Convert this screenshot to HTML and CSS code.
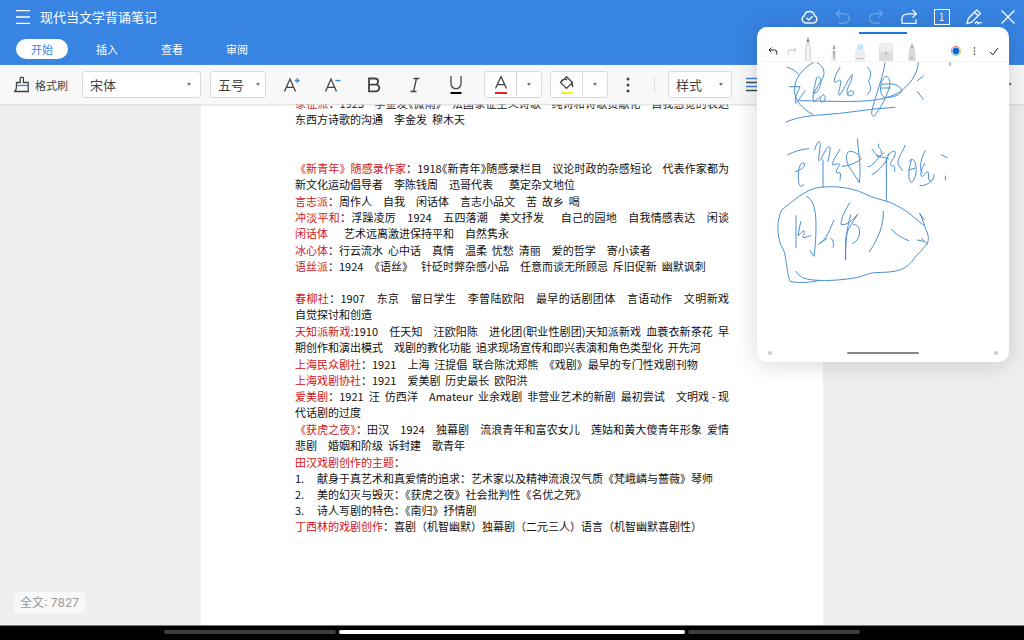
FILE: index.html
```html
<!DOCTYPE html>
<html lang="zh-CN">
<head>
<meta charset="utf-8">
<title>现代当文学背诵笔记</title>
<link rel="stylesheet" href="styles.css">
</head>
<body>
<div class="app">
  <header class="header">
    <div class="titlebar">
      <button class="icon-btn menu-btn" aria-label="菜单"><svg width="14" height="14" viewBox="0 0 14 14"><path d="M0 .7h14M0 7h14M0 13.3h14"/></svg></button>
      <h1 class="title">现代当文学背诵笔记</h1>
      <div class="actions">
        <button class="icon-btn" aria-label="云同步"><svg width="17" height="16" viewBox="0 0 17 16"><path d="M4.500 14h8a3.800 3.800 0 0 0 1.200-7.200A5.300 5.300 0 0 0 3.300 6.800 3.800 3.800 0 0 0 4.500 14z"/><path d="M5.500 8.800l2.300 2.200 3.800-3.800"/></svg></button>
        <button class="icon-btn faded" aria-label="撤销"><svg width="16" height="16" viewBox="0 0 16 16"><path d="M5 1L1.500 4.600 5 8.200M1.800 4.600h7.700a4.800 4.800 0 0 1 0 9.600H4"/></svg></button>
        <button class="icon-btn faded" aria-label="重做"><svg width="16" height="16" viewBox="0 0 16 16"><path d="M11 1l3.500 3.600L11 8.200M14.200 4.600H6.500a4.800 4.800 0 0 0 0 9.600H12"/></svg></button>
        <button class="icon-btn" aria-label="分享"><svg width="16" height="16" viewBox="0 0 16 16"><path d="M11.500 1l4 3.800-4 3.800M15 4.800H7.500C3 4.800 1 7 1 9.500v4.800h14v-4"/></svg></button>
        <button class="icon-btn page-btn" aria-label="窗口"><span class="page-num">1</span></button>
        <button class="icon-btn" aria-label="编辑"><svg width="17" height="16" viewBox="0 0 17 16"><path d="M1 14.500l1.200-4.800L10.800 1l3.600 3.400-8.600 8.800zM8.600 3.400l3.500 3.400M9 14.600c1.500-2.500 2.500-2.500 3 0 1-1.500 2-1.200 3.800-.8"/></svg></button>
        <button class="icon-btn" aria-label="关闭"><svg width="16" height="16" viewBox="0 0 16 16"><path d="M1.500 1.500l13 13M14.500 1.500l-13 13"/></svg></button>
      </div>
    </div>
    <nav class="tabs">
      <button class="tab active">开始</button>
      <button class="tab">插入</button>
      <button class="tab">查看</button>
      <button class="tab">审阅</button>
    </nav>
  </header>

  <div class="toolbar">
    <button class="tool brush"><svg width="16" height="17" viewBox="0 0 16 17"><path d="M2.500 6.500h3.700V2a.7.7 0 0 1 .7-.7h1.800a.7.7 0 0 1 .7.700v4.500h4.800v9H.7c1.400-1.500 1.800-3 1.800-5z"/><path class="blue" d="M3.200 9.500h10.500"/></svg>格式刷</button>
    <label class="pick pick-font"><select aria-label="字体"><option>宋体</option></select></label>
    <label class="pick pick-size"><select aria-label="字号"><option>五号</option></select></label>
    <div class="formats">
      <button class="tool" aria-label="增大字号"><svg width="18" height="18" viewBox="0 0 18 18"><path d="M1.500 15.500L7 3l5.500 12.500M3.400 11.300h7.200"/><path class="blue" d="M11.800 4.500h5M14.300 2v5"/></svg></button>
      <button class="tool" aria-label="减小字号"><svg width="18" height="18" viewBox="0 0 18 18"><path d="M1.500 15.500L7 3l5.500 12.500M3.400 11.300h7.200"/><path class="blue" d="M11.500 4.500h5"/></svg></button>
      <button class="tool" aria-label="加粗"><svg width="18" height="18" viewBox="0 0 18 18"><path class="heavy" d="M4 2.500h6a3.100 3.100 0 0 1 0 6.200H4zM4 8.700h7a3.300 3.300 0 0 1 0 6.600H4z"/></svg></button>
      <button class="tool" aria-label="斜体"><svg width="18" height="18" viewBox="0 0 18 18"><path d="M7.500 2.500h6M4.500 15.500h6M10.500 2.500l-3 13"/></svg></button>
      <button class="tool" aria-label="下划线"><svg width="18" height="18" viewBox="0 0 18 18"><path d="M4 0v7.500a5 5.200 0 0 0 10 0V0"/><path class="ink" d="M3.500 17h11"/></svg></button>
    </div>
    <div class="split">
      <button class="tool" aria-label="字体颜色"><svg width="18" height="18" viewBox="0 0 18 18"><path d="M3.500 12.500L9 .5l5.500 12M5.300 8.700h7.400"/><path class="red" d="M3 17h12"/></svg></button>
      <button class="tool drop" aria-label="更多字体颜色"></button>
    </div>
    <div class="split">
      <button class="tool" aria-label="突出显示"><svg width="18" height="18" viewBox="0 0 18 18"><path d="M8.500.8l6 5.700-6 5.900-6-5.900zM3 5.500c1-2.200 4-3 6.200-1.600M14 7l.8 4"/><path class="yellow" d="M3 17h12"/></svg></button>
      <button class="tool drop" aria-label="更多突出显示颜色"></button>
    </div>
    <button class="tool more" aria-label="更多格式"><svg width="4" height="18" viewBox="0 0 4 18"><circle cx="2" cy="3" r="1.500"/><circle cx="2" cy="9" r="1.500"/><circle cx="2" cy="15" r="1.500"/></svg></button>
    <span class="rule"></span>
    <label class="pick pick-style"><select aria-label="样式"><option>样式</option></select></label>
    <button class="tool align" aria-label="对齐"><svg width="18" height="16" viewBox="0 0 18 16"><path class="blue" d="M0 1.500h16M0 9.500h16"/><path d="M0 5.500h16M0 13.500h11"/></svg></button>
    <button class="tool drop last" aria-label="更多工具"></button>
  </div>

  <main class="workspace">
    <article class="page">
      <p class="long"><span class="fill"><b>象征派</b>：1925    李金发<span class="half">《</span>微雨<span class="half">》</span>    法国象征主义诗歌    纯诗和诗歌贡献化    自我感觉的表达</span>东西方诗歌的沟通　李金发  穆木天</p>
      <p class="blank"></p>
      <p class="blank"></p>
      <p class="long"><span class="fill"><b>《新青年》随感录作家</b>：1918<span class="half">《</span>新青年<span class="half">》</span>随感录栏目    议论时政的杂感短论    代表作家都为</span>新文化运动倡导者　李陈钱周　迅哥代表　  奠定杂文地位</p>
      <p><b>言志派</b>：周作人　自我　闲话体　言志小品文　苦  故乡  喝</p>
      <p class="long"><span class="fill"><b>冲淡平和</b>：浮躁凌厉　1924　五四落潮　美文抒发　  自己的园地　自我情感表达　闲谈</span><b>闲话体</b>　  艺术远离激进保持平和　自然隽永</p>
      <p><b>冰心体</b>：行云流水  心中话　真情　温柔  忧愁  清丽　爱的哲学　寄小读者</p>
      <p><b>语丝派</b>：1924　《语丝》　 针砭时弊杂感小品　任意而谈无所顾忌  斥旧促新  幽默讽刺</p>
      <p class="blank"></p>
      <p class="long"><span class="fill"><b>春柳社</b>：1907　东京　留日学生　李曾陆欧阳　最早的话剧团体　言语动作　文明新戏</span>自觉探讨和创造</p>
      <p class="long"><span class="fill"><b>天知派新戏</b>:1910　任天知　汪欧阳陈　进化团(职业性剧团)天知派新戏  血蓑衣新茶花  早</span>期创作和演出模式　戏剧的教化功能  追求现场宣传和即兴表演和角色类型化  开先河</p>
      <p><b>上海民众剧社</b>：1921　上海  汪提倡  联合陈沈郑熊　《戏剧》最早的专门性戏剧刊物</p>
      <p><b>上海戏剧协社</b>：1921　爱美剧  历史最长  欧阳洪</p>
      <p class="long"><span class="fill"><b>爱美剧</b>：1921  汪  仿西洋　Amateur  业余戏剧  非营业艺术的新剧  最初尝试　文明戏 - 现</span>代话剧的过度</p>
      <p class="long"><span class="fill"><b>《获虎之夜》</b>：田汉　1924　独幕剧　流浪青年和富农女儿　莲姑和黄大傻青年形象  爱情</span>悲剧　婚姻和阶级  诉封建　歌青年</p>
      <p><b>田汉戏剧创作的主题</b>：</p>
      <ol class="themes">
        <li>献身于真艺术和真爱情的追求：艺术家以及精神流浪汉气质《梵峨嶙与蔷薇》琴师</li>
        <li>美的幻灭与毁灭：《获虎之夜》社会批判性《名优之死》</li>
        <li>诗人写剧的特色：《南归》抒情剧</li>
      </ol>
      <p><b>丁西林的戏剧创作</b>：喜剧（机智幽默）独幕剧（二元三人）语言（机智幽默喜剧性）</p>
    </article>
    <div class="count">全文: 7827</div>
  </main>

  <footer class="dock"><div class="dock-bars"><span class="bar"></span><span class="bar current"></span><span class="bar"></span></div></footer>
</div>

<section class="note" aria-label="手写便签">
  <div class="note-grip"></div>
  <div class="note-tools">
    <div class="note-group">
      <button class="note-btn" aria-label="撤销"><svg width="10" height="8" viewBox="0 0 10 8"><path d="M3.500.7L1 3l2.500 2.300M1.200 3h5.300A2.300 2.300 0 0 1 8.800 5.300V7.500"/></svg></button>
      <button class="note-btn faded" aria-label="重做"><svg width="10" height="8" viewBox="0 0 10 8"><path d="M6.500.7L9 3 6.500 5.300M8.800 3H3.500A2.300 2.300 0 0 0 1.200 5.300V7.500"/></svg></button>
    </div>
    <div class="pens">
      <button class="pen" aria-label="钢笔"><svg width="14" height="24" viewBox="0 0 14 24"><path fill="#3c7fc0" d="M7 0l1.300 5H5.700z"/><path fill="#e2e2e2" d="M5.500 5h3L10 10v14H4V10z"/><path fill="#f7f7f7" d="M6 9h2v15H6z"/></svg></button>
      <button class="pen" aria-label="毛笔"><svg width="14" height="24" viewBox="0 0 14 24"><path fill="#959595" d="M7 7l1.500 6h-3z"/><path fill="#ececec" d="M5 12h4l1 12H4z"/><path fill="#a5a5a5" d="M6 14h2l-.5 8h-1z"/></svg></button>
      <button class="pen" aria-label="荧光笔"><svg width="14" height="24" viewBox="0 0 14 24"><path fill="#bfe3f6" d="M5 8l5-1v5H4z"/><path fill="#ededed" d="M4 12h6l2 3v9H2v-9z"/><path fill="#c5c5c5" d="M3 21h8v1H3z"/></svg></button>
      <button class="pen" aria-label="橡皮"><svg width="14" height="24" viewBox="0 0 14 24"><rect width="14" height="20" y="6" rx="3" fill="#ddd"/><rect width="14" height="9" y="6" rx="3" fill="#ededed"/><path d="M7 14.500v3.500" stroke="#aaa"/></svg></button>
      <button class="pen" aria-label="铅笔"><svg width="14" height="24" viewBox="0 0 14 24"><path fill="#b0b0b0" d="M7 6l2 5H5z"/><path fill="#dadada" d="M5 11h4l1.500 3v10h-7V14z"/><path fill="#bbb" d="M5 20h3v2H5z"/></svg></button>
    </div>
    <div class="note-group">
      <button class="note-btn swatch" aria-label="颜色"><span class="swatch-dot"></span></button>
      <button class="note-btn" aria-label="更多"><svg class="dots" width="3" height="8" viewBox="0 0 3 8"><circle cx="1.500" cy="1" r=".8"/><circle cx="1.500" cy="4" r=".8"/><circle cx="1.500" cy="7" r=".8"/></svg></button>
      <button class="note-btn" aria-label="完成"><svg width="10" height="9" viewBox="0 0 10 9"><path d="M1 5l2.800 2.800L9 1"/></svg></button>
    </div>
  </div>
  <svg class="strokes" viewBox="21 -69 756 1005" aria-hidden="true">
    <g transform="translate(90 30)">
      <path d="M22 22c12 2 24 10 33 20M28 80h32c-4 14-16 26-14 48 4 8 16-20 29-36M100 8C70 22 40 58 44 92c0 30 24 56 54 71"/>
      <path d="M112 8c20 12 26 32 14 50-10 14-18 28-24 42 12 0 22-22 20-42-4-12-12-10-14 2-4 22-14 52-6 66l18-16M130 104c-10 4-12 18-6 22 10 4 18-18 6-22"/>
      <path d="M180 22c-8 14-20 34-16 44 6 4 16-12 18-4 2 14-10 34-4 44 12-12 24-46 38-62 2 24-20 40-14 58 8 10 22 4 18-8-8-6-20 4-16 14M262 22c10 8 14 18 6 36-6 6 4 16 4 24 0 10-4 16-10 21"/>
      <path d="M315 8c-4 40-30 100-40 148 0 8 2 14 8 12 18-22 42-66 46-92 2-16-4-30-14-26-16 14-20 56 0 62 24 2 48-8 50-20-2-16-30-26-60-18M305 84h26"/>
      <path d="M415 8c-2 36-26 66-56 88-36 22-80 26-130 28-60 2-120-2-170-2M18 186c32-14 66-18 102-21 80-4 150-20 225-23"/>
      <path d="M430 48l-18 14M412 95l18 23M510 8v9"/>
    </g>
    <path d="M113 314c20-8 38-17 63-18M136 365c22-6 32-18 26-26-12-4-18 20-17 46 2 20 4 32 16 18M194 299c4-12 8-26 14-24 8 6-4 42-2 58M212 330c14-30 22-46 28-38 2 10-4 28-6 42M219 330v81M270 298c-14 22-26 42-22 46 8 2 18-6 22 0-6 8-14 18-10 24 6 2 10-2 12 4l-2 18"/>
    <path d="M322 267c4 44 12 90 6 131-12-22-32-44-36-60-4-16-4-30 6-34 14 0 24 6 34 18M276 349c18-2 38-6 58-22"/>
    <path d="M386 282c-6 12 12 14 8 28M366 298c10 14 20 26 28 18M354 350c12 6 30-32 48-42M366 374c24-14 44-36 50-62M380 318l36 8M409 325v128M412 318c20-22 28-18 22 0-4 10-16 22-12 28 8 4 14-4 12 18M466 286c-8 20-24 38-22 54 2 10 10 12 12 22M484 330c-8 26-12 58 0 68 12-8 18-34 12-58-4-14-12-16-18-6M476 360l20-6M526 302c-12 18-20 54-10 66M524 340c-10 20-14 30-10 38 6 8 12-16 20-12 4 6-2 18 4 26 8 4 16-8 14-18M510 406c12 4 30-6 40-20"/>
    <path d="M574 314l17 9M586 378v12"/>
    <g transform="translate(0 390)">
      <path d="M95 90C120 72 164 26 210 22c50-6 104 2 144 24 30 14 58 14 84 30 32 14 62 44 84 60 18 34 16 50 2 64-14 20-28 26-38 44-28 34-64 32-112 34-32 4-32 12-62 16-60 10-124 10-152 0-10-6-18-12-22-20M95 90c-16 34-14 74-2 106 12 20 12 28 14 42 6 30 6 54 14 66 28 6 58 4 88-3"/>
      <path d="M138 107v95M152 125l-8 42c12-8 16-18 18-14 4 12-10 18 0 20 8-2 14-4 20-6M170 49c26 12 28 60 28 90 0 32-2 58-6 90-4-4-8-10-12-18"/>
      <path d="M252 120c-10 22-22 60-46 72l24-16M242 174c10 8 8 16 8 28M299 69c-12 20-26 44-26 64 14 6 36-14 50-30-20 32-36 50-36 80v57M302 105c-12 40-16 88-16 134M310 134c26-4 26 46-2 56M400 94c2 40-16 84-42 121M424 148c16 16 32 28 53 34M502 180l20 4M514 174l18 18M510 101l14 34M509 101l14 18"/>
    </g>
  </svg>
  <div class="note-foot"><span class="foot-dot"></span><span class="foot-bar"></span><span class="foot-dot"></span></div>
</section>
</body>
</html>
```

FILE: styles.css
```css
* { box-sizing: border-box; }

body {
  margin: 0;
  font-family: "Noto Sans CJK SC", sans-serif;
  font-size: 11px;
  color: #444;
  background: #efefef;
}

button, select {
  font: inherit;
  color: inherit;
  background: none;
  border: 0;
  padding: 0;
  margin: 0;
}

svg {
  display: block;
  fill: none;
  stroke: currentColor;
  stroke-width: 1.3;
}

.app {
  display: flex;
  flex-direction: column;
  height: 100vh;
  overflow: hidden;
}

/* Header */
.header {
  flex: none;
  background: #3884e3;
  color: #fff;
  padding-bottom: 6px;
}

.titlebar {
  display: flex;
  align-items: center;
  height: 33px;
  padding-left: 16px;
}

.title {
  margin: 0 0 0 10px;
  font-size: 13px;
  font-weight: 400;
}

.actions {
  display: flex;
  margin-left: auto;
}

.icon-btn {
  display: flex;
  align-items: center;
  justify-content: center;
  width: 33px;
  height: 33px;
}

.menu-btn { width: 14px; }
.faded { opacity: 0.3; }

.page-num {
  width: 16px;
  height: 16px;
  border: 1px solid #fff;
  font-size: 10px;
  line-height: 14px;
}

.tabs {
  display: flex;
  gap: 13px;
  padding: 6px 16px 0;
}

.tab {
  width: 52px;
  height: 20px;
  border-radius: 10px;
  line-height: 19px;
}

.tab.active {
  background: #fff;
  color: #3884e3;
}

/* Toolbar */
.toolbar {
  position: relative;
  z-index: 1;
  flex: none;
  display: flex;
  align-items: center;
  height: 39px;
  padding: 0 12px 0 14px;
  background: #f8f8f8;
  box-shadow: 0 1px 2px #d8d8d8;
}

.tool {
  display: flex;
  align-items: center;
  justify-content: center;
}

.brush { gap: 5px; }
.blue { stroke: #3884e3; }
.ink { stroke: #000; stroke-width: 2; }
.red { stroke: #e6222a; stroke-width: 2; }
.yellow { stroke: #f5ee28; stroke-width: 2; }
.heavy { stroke-width: 1.8; }

.pick {
  position: relative;
  flex: none;
  height: 27px;
}

.pick select {
  appearance: none;
  width: 100%;
  height: 100%;
  padding: 0 7px 1px;
  background: #fff;
  border: 1px solid #dadada;
  border-radius: 3px;
  font-size: 13px;
}

.pick::after, .drop::after {
  content: "";
  border: 2px solid transparent;
  border-top: 3px solid #777;
  border-bottom: 0;
}

.pick::after {
  position: absolute;
  right: 10px;
  top: 12px;
}

.pick-font { width: 119px; margin-left: 14px; }
.pick-size { width: 56px; margin-left: 9px; }
.pick-size::after { right: 6px; }
.pick-style { width: 64px; margin-left: 13px; }
.pick-style::after { right: 9px; }

.formats {
  display: flex;
  margin-left: 5px;
}

.formats .tool { width: 41px; height: 27px; }

.split {
  display: flex;
  width: 58px;
  height: 27px;
  margin-left: 8px;
  background: #fff;
  border: 1px solid #dadada;
  border-radius: 3px;
}

.split .tool { flex: 1 1 31px; }
.split .drop { flex: 1 1 25px; border-left: 1px solid #dadada; }

.more { margin-left: 18px; }
.more svg, .dots { fill: currentColor; stroke: none; }

.rule {
  width: 1px;
  height: 16px;
  margin-left: 24px;
  background: #ddd;
}

.align { margin-left: 14px; }
.last { margin-left: auto; }

/* Document */
.workspace {
  position: relative;
  flex: 1;
  min-height: 0;
  overflow: hidden;
  background: #efefef;
}

.page {
  max-width: 622px;
  min-height: 100%;
  margin: -9px auto 0;
  padding: 0 94px 98px;
  background: #fff;
  color: #111;
  line-height: 16px;
}

.page p { margin: 0; white-space: pre-wrap; }
.page .long { margin-bottom: 1px; }
.page .blank { height: 16px; }
.page b { font-weight: 400; color: #d0141b; }

.fill {
  display: block;
  text-align: justify;
  text-align-last: justify;
}

/* Half-width book title marks */
.half { font-feature-settings: "halt"; }

.themes {
  margin: 0;
  padding: 0;
  list-style: none;
  counter-reset: theme;
}

.themes li {
  display: flex;
  counter-increment: theme;
}

.themes li::before {
  content: counter(theme) ".";
  flex: none;
  width: 22px;
}

.count {
  position: absolute;
  left: 14px;
  bottom: 12px;
  padding: 0 6px;
  border-radius: 3px;
  background: #f8f8f8;
  color: #999;
  font-family: Inter, "Noto Sans CJK SC", sans-serif;
  font-size: 12px;
  line-height: 21px;
}

/* System dock */
.dock {
  flex: none;
  height: 15px;
  padding-top: 4px;
  background: #000;
  border-top: 1px solid #777;
}

.dock-bars {
  display: flex;
  gap: 3px;
  width: 68%;
  margin: 0 auto;
}

.bar {
  flex: 1;
  height: 4px;
  border-radius: 2px;
  background: #3c3c3c;
}

.bar.current { flex: 2; background: #fff; }

/* Floating handwriting window */
.note {
  position: absolute;
  z-index: 2;
  top: 27px;
  right: 15px;
  display: flex;
  flex-direction: column;
  width: 252px;
  height: 335px;
  border-radius: 10px;
  background: #fff;
  color: #222;
  box-shadow: 0 2px 24px rgba(0, 0, 0, 0.16);
}

.note-grip {
  width: 48px;
  height: 2px;
  margin: 5px auto 0;
  background: #1b78dc;
}

.note-tools {
  display: flex;
  justify-content: space-between;
  height: 28px;
  padding: 0 6px;
  border-bottom: 1px solid #f5f5f5;
}

.note-group { display: flex; }

.note-btn {
  display: flex;
  align-items: center;
  justify-content: center;
  width: 19px;
  height: 34px;
}

.note-btn svg { stroke-width: 1; }

.pens {
  display: flex;
  align-items: flex-end;
  gap: 12px;
  margin-right: auto;
}

.pen svg { stroke: none; }

.swatch-dot {
  width: 10px;
  height: 10px;
  border-radius: 50%;
  border: 1px solid transparent;
  background:
    radial-gradient(#1668c8 0 3px, #fff 4px) padding-box,
    conic-gradient(#f66, #fc5, #6d6, #5cf, #a7f, #f66) border-box;
}

.strokes {
  position: absolute;
  inset: 0;
  width: 100%;
  height: 100%;
  pointer-events: none;
  color: #4a8fd2;
  stroke-width: 3;
  stroke-linecap: round;
  stroke-linejoin: round;
}

.note-foot {
  display: flex;
  align-items: center;
  justify-content: space-between;
  margin-top: auto;
  padding: 0 11px 7px;
}

.foot-dot {
  width: 4px;
  height: 4px;
  border-radius: 50%;
  background: #ccc;
}

.foot-bar {
  width: 72px;
  height: 2px;
  border-radius: 1px;
  background: #888;
}
```
